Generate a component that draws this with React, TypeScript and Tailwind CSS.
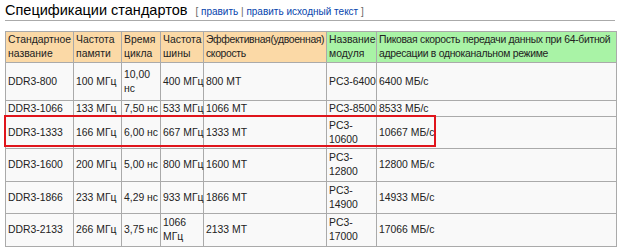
import type { ReactNode } from 'react';

type Row = {
  name: string;
  mem: string;
  cycle: ReactNode;
  bus: ReactNode;
  eff: string;
  mod: ReactNode;
  peak: string;
  h: string;
};

const rows: Row[] = [
  { name: 'DDR3-800', mem: '100 МГц', cycle: <>10,00<br />нс</>, bus: '400 МГц', eff: '800 MT', mod: 'PC3-6400', peak: '6400 МБ/с', h: 'h-[38px]' },
  { name: 'DDR3-1066', mem: '133 МГц', cycle: '7,50 нс', bus: '533 МГц', eff: '1066 MT', mod: 'PC3-8500', peak: '8533 МБ/с', h: 'h-[16px]' },
  { name: 'DDR3-1333', mem: '166 МГц', cycle: '6,00 нс', bus: '667 МГц', eff: '1333 MT', mod: <>PC3-<br />10600</>, peak: '10667 МБ/с', h: 'h-[32px]' },
  { name: 'DDR3-1600', mem: '200 МГц', cycle: '5,00 нс', bus: '800 МГц', eff: '1600 MT', mod: <>PC3-<br />12800</>, peak: '12800 МБ/с', h: 'h-[33px]' },
  { name: 'DDR3-1866', mem: '233 МГц', cycle: '4,29 нс', bus: '933 МГц', eff: '1866 MT', mod: <>PC3-<br />14900</>, peak: '14933 МБ/с', h: 'h-[32px]' },
  { name: 'DDR3-2133', mem: '266 МГц', cycle: '3,75 нс', bus: <>1066<br />МГц</>, eff: '2133 MT', mod: <>PC3-<br />17000</>, peak: '17066 МБ/с', h: 'h-[33px]' },
];

const th = 'border border-[#aaa] pl-[2px] pr-0 py-0 text-left align-middle font-normal whitespace-nowrap overflow-visible';
const td = 'border border-[#aaa] pl-[2px] pr-0 py-0 text-left align-middle whitespace-nowrap overflow-visible';

export default function App() {
  return (
    <div
      className="relative w-[620px] h-[250px] overflow-hidden bg-white pl-[5px] pr-[5px] pt-[2px] text-[#222]"
      style={{ fontFamily: '"Liberation Sans", Arial, sans-serif' }}
    >
      <div className="flex items-baseline gap-[8px] border-b border-[#aaa] pb-[1px]">
        <h2 className="text-[14.5px] leading-[17px] text-black">Спецификации стандартов</h2>
        <span className="text-[10px] text-[#666]">
          [ <span className="text-[#0645ad]">править</span> |{' '}
          <span className="text-[#0645ad]">править исходный текст</span> ]
        </span>
      </div>

      <table className="mt-[10px] w-[611px] table-fixed border-collapse border border-[#aaa] bg-[#f9f9f9] text-[10.4px] leading-[14px]">
        <colgroup>
          <col className="w-[68px]" />
          <col className="w-[48px]" />
          <col className="w-[39px]" />
          <col className="w-[43px]" />
          <col className="w-[123px]" />
          <col className="w-[50px]" />
          <col className="w-[240px]" />
        </colgroup>
        <thead>
          <tr className="h-[31px]">
            <th className={`${th} bg-[#fbd9a6]`}>Стандартное<br />название</th>
            <th className={`${th} bg-[#fbd9a6]`}>Частота<br />памяти</th>
            <th className={`${th} bg-[#fbd9a6]`}>Время<br />цикла</th>
            <th className={`${th} bg-[#fbd9a6]`}>Частота<br />шины</th>
            <th className={`${th} bg-[#fbd9a6] tracking-[-0.35px]`}>Эффективная(удвоенная)<br />скорость</th>
            <th className={`${th} bg-[#a9f3a6]`}>Название<br />модуля</th>
            <th className={`${th} bg-[#a9f3a6] tracking-[-0.3px]`}>
              Пиковая скорость передачи данных при 64-битной
              <br />
              адресации в одноканальном режиме
            </th>
          </tr>
        </thead>
        <tbody>
          {rows.map((r) => (
            <tr key={r.name} className={r.h}>
              <td className={td}>{r.name}</td>
              <td className={td}>{r.mem}</td>
              <td className={td}>{r.cycle}</td>
              <td className={td}>{r.bus}</td>
              <td className={td}>{r.eff}</td>
              <td className={td}>{r.mod}</td>
              <td className={td}>{r.peak}</td>
            </tr>
          ))}
        </tbody>
      </table>

      <div className="absolute left-[4px] top-[115px] h-[32px] w-[432px] border-2 border-[#e0141b]" />
    </div>
  );
}
